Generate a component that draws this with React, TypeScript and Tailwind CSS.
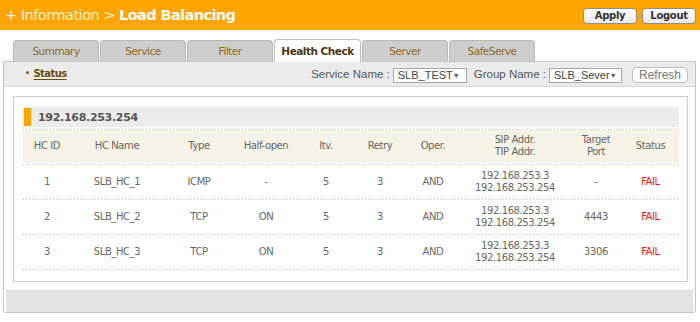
import React from "react";

const cols =
  "grid grid-cols-[48px_92px_72px_62px_58px_50px_56px_108px_54px_55px] items-center text-center";

function Dots() {
  return (
    <div className="h-px bg-[linear-gradient(to_right,#c2c2c2_1px,transparent_1px)] bg-[length:3px_1px]" />
  );
}

const rows = [
  { id: "1", name: "SLB_HC_1", type: "ICMP", half: "-", itv: "5", retry: "3", oper: "AND", port: "-" },
  { id: "2", name: "SLB_HC_2", type: "TCP", half: "ON", itv: "5", retry: "3", oper: "AND", port: "4443" },
  { id: "3", name: "SLB_HC_3", type: "TCP", half: "ON", itv: "5", retry: "3", oper: "AND", port: "3306" },
];

const tabs = ["Summary", "Service", "Filter", "Health Check", "Server", "SafeServe"];

function Select({ value, w }: { value: string; w: string }) {
  return (
    <div
      className={`${w} h-[15px] border border-[#a8a8a8] bg-white flex items-center justify-between pl-[4px] pr-[6px] font-['Liberation_Sans',sans-serif] text-[11px] text-[#444] leading-none`}
    >
      <span>{value}</span>
      <span className="text-[7px] text-[#555]">▼</span>
    </div>
  );
}

export default function App() {
  return (
    <div className="w-[700px] h-[322px] bg-white font-['DejaVu_Sans',sans-serif] overflow-hidden">
      {/* Header */}
      <div className="h-[30px] bg-[#fea500] flex items-center justify-between pl-[5px] pr-[4px]">
        <div className="flex items-baseline text-[14.5px] tracking-[-0.5px] leading-none">
          <span className="text-[#fff2d8]">+ Information &gt;&nbsp;</span>
          <span className="text-white font-bold tracking-[-0.6px]">Load Balancing</span>
        </div>
        <div className="flex gap-[5px] mt-[1px]">
          {["Apply", "Logout"].map((b) => (
            <div
              key={b}
              className="w-[54px] h-[16px] rounded-[4px] border border-[#8f8f8f] bg-[linear-gradient(to_bottom,#ffffff,#e9e9e9)] flex items-center justify-center text-[10px] font-bold text-[#333] tracking-[-0.3px] leading-none"
            >
              {b}
            </div>
          ))}
        </div>
      </div>

      {/* Tabs */}
      <div className="mt-[9px] h-[22px] flex items-end gap-px pl-[13px] relative z-10">
        {tabs.map((t) =>
          t === "Health Check" ? (
            <div
              key={t}
              className="w-[87px] h-[23px] -mb-px rounded-t-[4px] border border-b-0 border-[#bdbdbd] bg-white flex items-center justify-center text-[10.5px] font-bold text-[#4a3810] tracking-[-0.5px] leading-none"
            >
              {t}
            </div>
          ) : (
            <div
              key={t}
              className="w-[86px] h-[21px] rounded-t-[4px] border border-b-0 border-[#b8b8b8] bg-[#cecece] flex items-center justify-center text-[10.5px] text-[#8c6a1c] tracking-[-0.5px] leading-none pt-[1px]"
            >
              {t}
            </div>
          )
        )}
      </div>

      {/* Panel */}
      <div className="mx-[3px] w-[693px] border border-[#c6c6c6] rounded-b-[3px] bg-white">
        <div className="h-[25px] bg-[#ebebeb] border-b border-[#d9d9d9] flex items-center justify-between pl-[21px] pr-[7px]">
          <div className="flex items-center gap-[4px] text-[10px] font-bold text-[#6b4c0c] tracking-[-0.6px] leading-none">
            <span className="text-[8px] text-[#8a5a10]">•</span>
            <span className="underline underline-offset-[2px]">Status</span>
          </div>
          <div className="flex items-center mt-[2px] font-['Liberation_Sans',sans-serif] text-[11.5px] text-[#555] leading-none">
            <span>Service Name :</span>
            <div className="ml-[3px]">
              <Select value="SLB_TEST" w="w-[74px]" />
            </div>
            <span className="ml-[7px]">Group Name :</span>
            <div className="ml-[3px]">
              <Select value="SLB_Sever" w="w-[73px]" />
            </div>
            <div className="ml-[10px] w-[56px] h-[16px] rounded-[5px] border border-[#bdbdbd] bg-white flex items-center justify-center text-[12px] text-[#777]">
              Refresh
            </div>
          </div>
        </div>

        {/* Inner box */}
        <div className="mt-[9px] ml-[9px] w-[675px] border border-[#cfcfcf] pt-[10px] pl-[9px] pr-[8px] pb-[11px]">
          <div className="h-[20px] bg-[#ececec] flex items-center">
            <div className="ml-px w-[7px] h-[18px] bg-[#fea500]" />
            <span className="ml-[7px] text-[11px] font-bold text-[#555] tracking-[-0.3px] leading-none">
              192.168.253.254
            </span>
          </div>
          <div className="h-[2px]" />
          <Dots />
          <div className={`${cols} h-[32px] bg-[#f6f3e6] text-[10px] text-[#666] tracking-[-0.4px] leading-[12px]`}>
            <span>HC ID</span>
            <span>HC Name</span>
            <span>Type</span>
            <span>Half-open</span>
            <span>Itv.</span>
            <span>Retry</span>
            <span>Oper.</span>
            <span>
              SIP Addr.
              <br />
              TIP Addr.
            </span>
            <span>
              Target
              <br />
              Port
            </span>
            <span>Status</span>
          </div>
          <div className="h-[2px]" />
          <Dots />
          {rows.map((r) => (
            <React.Fragment key={r.id}>
              <div className={`${cols} h-[34px] text-[10px] text-[#666] tracking-[-0.4px] leading-[12px]`}>
                <span>{r.id}</span>
                <span>{r.name}</span>
                <span>{r.type}</span>
                <span>{r.half}</span>
                <span>{r.itv}</span>
                <span>{r.retry}</span>
                <span>{r.oper}</span>
                <span>
                  192.168.253.3
                  <br />
                  192.168.253.254
                </span>
                <span>{r.port}</span>
                <span className="text-[#ff1010]">FAIL</span>
              </div>
              <Dots />
            </React.Fragment>
          ))}
        </div>

        <div className="mt-[8px] mx-[2px] h-[22px] bg-[#e4e4e4] border-t border-[#d4d4d4]" />
      </div>
    </div>
  );
}
